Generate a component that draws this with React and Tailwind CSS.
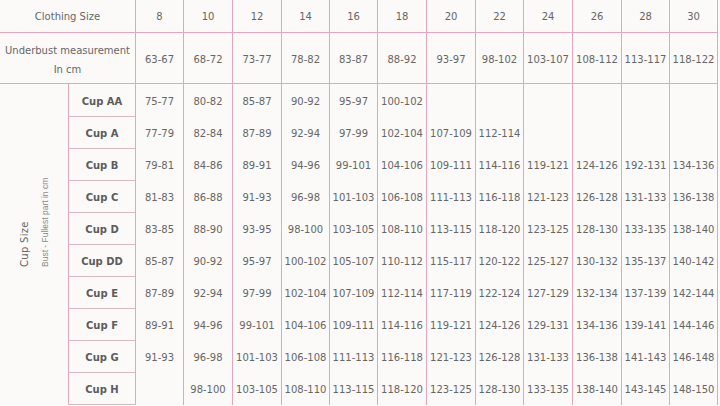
import React from "react";

const sizes = ["8", "10", "12", "14", "16", "18", "20", "22", "24", "26", "28", "30"];
const underbust = ["63-67", "68-72", "73-77", "78-82", "83-87", "88-92", "93-97", "98-102", "103-107", "108-112", "113-117", "118-122"];
const cups = [
  ["Cup AA", ["75-77", "80-82", "85-87", "90-92", "95-97", "100-102", "", "", "", "", "", ""]],
  ["Cup A", ["77-79", "82-84", "87-89", "92-94", "97-99", "102-104", "107-109", "112-114", "", "", "", ""]],
  ["Cup B", ["79-81", "84-86", "89-91", "94-96", "99-101", "104-106", "109-111", "114-116", "119-121", "124-126", "192-131", "134-136"]],
  ["Cup C", ["81-83", "86-88", "91-93", "96-98", "101-103", "106-108", "111-113", "116-118", "121-123", "126-128", "131-133", "136-138"]],
  ["Cup D", ["83-85", "88-90", "93-95", "98-100", "103-105", "108-110", "113-115", "118-120", "123-125", "128-130", "133-135", "138-140"]],
  ["Cup DD", ["85-87", "90-92", "95-97", "100-102", "105-107", "110-112", "115-117", "120-122", "125-127", "130-132", "135-137", "140-142"]],
  ["Cup E", ["87-89", "92-94", "97-99", "102-104", "107-109", "112-114", "117-119", "122-124", "127-129", "132-134", "137-139", "142-144"]],
  ["Cup F", ["89-91", "94-96", "99-101", "104-106", "109-111", "114-116", "119-121", "124-126", "129-131", "134-136", "139-141", "144-146"]],
  ["Cup G", ["91-93", "96-98", "101-103", "106-108", "111-113", "116-118", "121-123", "126-128", "131-133", "136-138", "141-143", "146-148"]],
  ["Cup H", ["", "98-100", "103-105", "108-110", "113-115", "118-120", "123-125", "128-130", "133-135", "138-140", "143-145", "148-150"]],
];

export default function App() {
  return (
    <div
      className="w-[720px] h-[406px] overflow-hidden bg-[#fbfaf8] text-[#666] text-[10px]"
      style={{ fontFamily: '"DejaVu Sans", Verdana, sans-serif' }}
    >
      <div className="grid w-[718px] grid-cols-[68px_68px_48px_49px_49px_48px_48px_49px_49px_48px_49px_49px_48px_48px] grid-rows-[33px_51px_33px_repeat(9,32px)]">
        {/* Header row */}
        <div className="col-span-2 flex items-center justify-center pt-px border-b border-r border-[#e0a7c0]">
          Clothing Size
        </div>
        {sizes.map((s) => (
          <div key={s} className="flex items-center justify-center pt-px border-b border-r border-[#e0a7c0]">
            {s}
          </div>
        ))}

        {/* Underbust row */}
        <div className="col-span-2 flex flex-col items-center justify-center pt-[3px] leading-[19px] border-b border-r border-[#e0a7c0]">
          <span>Underbust measurement</span>
          <span>In cm</span>
        </div>
        {underbust.map((u, i) => (
          <div key={i} className="flex items-center justify-center pt-[3px] border-b border-r border-[#e0a7c0]">
            {u}
          </div>
        ))}

        {/* Cup size side label */}
        <div className="row-span-10 row-start-3 col-start-1 flex items-end justify-start pl-[15px] pb-[138px]">
          <div
            className="h-[100px] whitespace-nowrap"
            style={{ writingMode: "vertical-rl", transform: "rotate(180deg)" }}
          >
            <div className="leading-[20px] text-[10px] text-[#666] tracking-[0.3px]">Cup Size</div>
            <div
              className="leading-[20px] text-[8.5px] text-[#8a8a8a]"
              style={{ fontFamily: '"Liberation Sans", Arial, sans-serif' }}
            >
              Bust - Fullest part in cm
            </div>
          </div>
        </div>

        {cups.map(([label, vals], r) => (
          <React.Fragment key={label}>
            <div
              className="col-start-2 flex items-center justify-center pt-[2px] font-bold text-[#5c5c5c] border-l border-r border-b border-l-[#e0a7c0] border-r-[#e0a7c0] border-b-[#d8b9c6]"
              style={{ gridRowStart: r + 3 }}
            >
              {label}
            </div>
            {vals.map((v, i) => (
              <div key={i} className="flex items-center justify-center pt-px border-r border-[#e0a7c0]">
                {v}
              </div>
            ))}
          </React.Fragment>
        ))}
      </div>
    </div>
  );
}
